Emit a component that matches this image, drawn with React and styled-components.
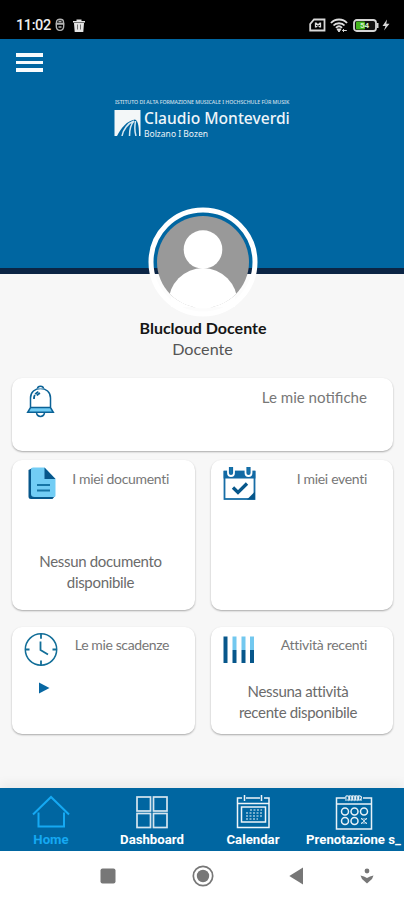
import React from 'react';
import styled, { createGlobalStyle } from 'styled-components';

const BLUE = '#0066a1';

const cards = [
  { id: 'notifiche', title: 'Le mie notifiche', icon: BellIcon, wide: true, height: 73 },
  { id: 'documenti', title: 'I miei documenti', icon: DocumentIcon, height: 150, spacing: -0.32, lines: ['Nessun documento', 'disponibile'], offset: 91, shift: -3 },
  { id: 'eventi', title: 'I miei eventi', icon: EventIcon, height: 150, spacing: -0.32 },
  { id: 'scadenze', title: 'Le mie scadenze', icon: ClockIcon, height: 107, low: true, play: true, spacing: -0.38 },
  { id: 'attivita', title: 'Attività recenti', icon: BarsIcon, height: 107, low: true, spacing: -0.28, lines: ['Nessuna attività', 'recente disponibile'], offset: 54, shift: -4 },
];

const tabs = [
  { label: 'Home', icon: HomeIcon, active: true },
  { label: 'Dashboard', icon: GridIcon },
  { label: 'Calendar', icon: CalendarIcon },
  { label: 'Prenotazione s_', icon: BookingIcon },
];

function App() {
  return (
    <Screen>
      <GlobalStyle />
      <StatusBar />
      <Header>
        <MenuButton aria-label="Menu"><i /><i /><i /></MenuButton>
        <Logo />
      </Header>
      <Profile>
        <Avatar />
        <UserName>Blucloud Docente</UserName>
        <UserRole>Docente</UserRole>
      </Profile>
      <CardGrid>
        {cards.map((card) => <Card key={card.id} card={card} />)}
      </CardGrid>
      <TabBar>
        {tabs.map((tab) => (
          <Tab key={tab.label} $active={tab.active}>
            <tab.icon />
            <TabLabel>{tab.label}</TabLabel>
          </Tab>
        ))}
      </TabBar>
      <SystemNav />
    </Screen>
  );
}

function Card({ card }) {
  const Icon = card.icon;
  return (
    <CardBox $wide={card.wide} $height={card.height}>
      <CardTop $low={card.low}>
        <Icon />
        <CardTitle $wide={card.wide} $spacing={card.spacing}>{card.title}</CardTitle>
      </CardTop>
      {card.play && (
        <PlaySvg width="12" height="12" viewBox="0 0 12 12">
          <path d="M1 0.5 L11.5 6 L1 11.5z" fill="#0867a2" />
        </PlaySvg>
      )}
      {card.lines && (
        <CardText $offset={card.offset} $low={card.low} $shift={card.shift}>
          {card.lines.map((line) => <span key={line}>{line}</span>)}
        </CardText>
      )}
    </CardBox>
  );
}

function StatusBar() {
  return (
    <StatusRow>
      <Clock>11:02</Clock>
      <svg width="10" height="14" viewBox="0 0 10 14" fill="none" stroke="#b4b4b4" strokeWidth="1.4">
        <path d="M1.5 5.500V4C1.500 .3 8.500 .3 8.500 4V5.500M.5 6h9M1.300 8C1.300 13.800 8.700 13.800 8.700 8V5.500H1.300zM3.500 9h3M3.500 3.500h3" />
      </svg>
      <TrashSvg width="12" height="13" viewBox="0 0 12 13">
        <path d="M0 2h3.5V.5h5V2H12v1.5H0zM1 4h10l-.7 9H1.700z" fill="#e5e5e5" />
        <path d="M4.500 5.500v5M7.500 5.500v5" stroke="#555" strokeWidth=".8" />
      </TrashSvg>
      <StatusSpacer />
      <svg width="17" height="14" viewBox="0 0 17 14">
        <path d="M5 1.500H15.500V12.500H1.200V6z" fill="none" stroke="#d8d8d8" strokeWidth="1.8" />
        <path d="M6.500 4.500v5M11.500 4.500v5M7 5l4 4M11 5l-4 4" stroke="#ddd" strokeWidth="1.3" />
      </svg>
      <WifiSvg width="18" height="14" viewBox="0 0 18 14" fill="none" stroke="#ddd" strokeWidth="1.900">
        <path d="M1 5C5 .3 13 .3 17 5M3.500 7.500C6 4.500 12 4.500 14.500 7.500M6 9.800c2-2 4-2 6 0" />
        <path d="M7 11h4l-2 3zM12.800 12.500h4M14 11.200l-1.500 1.300L14 13.800" fill="#ddd" strokeWidth="1" />
      </WifiSvg>
      <BatterySvg width="26" height="13" viewBox="0 0 26 13">
        <rect x="1" y="1" width="22" height="11" rx="2.800" fill="#111" stroke="#d5d5d5" strokeWidth="1.800" />
        <path d="M24.500 4v5" stroke="#d5d5d5" strokeWidth="2" />
        <rect x="3" y="2.600" width="9" height="7.800" rx="1" fill="#43b51c" />
        <text x="7" y="9.400" fontFamily="Roboto" fontSize="8" fontWeight="700" fill="#d3efc9">54</text>
      </BatterySvg>
      <svg width="8" height="12" viewBox="0 0 8 12">
        <path d="M5 .5L.5 7H3.500L2 11.500L7.500 4.800H4.300z" fill="#d7d7d7" />
      </svg>
    </StatusRow>
  );
}

function Logo() {
  return (
    <LogoBox>
      <LogoTop>ISTITUTO DI ALTA FORMAZIONE MUSICALE I HOCHSCHULE FÜR MUSIK</LogoTop>
      <LogoMain>
        <svg width="27" height="26" viewBox="0 0 27 26">
          <path d="M.5 0H26.500V26H.5z" fill="#f3f7f8" />
          <path d="M3 26C7 18 13 10.500 21 9.500C24.500 11 25 18 25 26z" fill={BLUE} />
          <path d="M8 26C9 20 14 13 20 11M15.500 26C15.500 20 17 14 20 11M22 26C20 20 21 14 21.500 11" stroke="#d8e9f2" strokeWidth="1.500" fill="none" />
        </svg>
        <LogoWords>
          <LogoName>Claudio Monteverdi</LogoName>
          <LogoPlace>Bolzano I Bozen</LogoPlace>
        </LogoWords>
      </LogoMain>
    </LogoBox>
  );
}

function Avatar() {
  return (
    <AvatarSvg width="110" height="110" viewBox="0 0 110 110">
      <defs>
        <clipPath id="face"><circle cx="55" cy="55" r="46" /></clipPath>
        <clipPath id="lower"><rect x="0" y="67" width="110" height="43" /></clipPath>
      </defs>
      <circle cx="55" cy="55" r="51" fill="#fcfcfc" clipPath="url(#lower)" />
      <circle cx="55" cy="55" r="52" fill="none" stroke="#fff" strokeWidth="5" />
      <g clipPath="url(#face)">
        <rect width="110" height="110" fill="#999" />
        <circle cx="55" cy="42.500" r="19.300" fill="#fff" />
        <ellipse cx="55" cy="96" rx="34.500" ry="35" fill="#fff" />
      </g>
      <path d="M23 89Q55 114 87 89V100H23z" fill="#fff" />
    </AvatarSvg>
  );
}

function BellIcon() {
  return (
    <svg width="33" height="33" viewBox="0 0 33 33" fill="none" stroke="#0b6296" strokeWidth="1.500">
      <path d="M6.500 22V13C6.500 7 11 3.500 16.500 3.500S26.500 7 26.500 13V22" fill="#fff" />
      <path d="M6.500 22.500h20l2.800 4.800H3.700z" fill="#72cdf4" />
      <path d="M13.500 3.500c.2-3 5.800-3 6 0M12.500 28c1 4.500 7 4.500 8 0" fill="#fff" />
      <path d="M10 14c0-4 1.500-6 5-7.500M13 10.500c.8-1.500 2-2 3.500-2.500" strokeWidth="1.800" strokeDasharray="4 1" />
    </svg>
  );
}

function DocumentIcon() {
  return (
    <DocSvg width="33" height="33" viewBox="0 0 33 33">
      <path d="M1.500 3L5.500 1V29H28L25.500 32H4Q1.500 32 1.500 29.500z" fill="#07578b" />
      <path d="M6 .5H17.500L28.500 12V28.500Q28.500 30 27 30H7.500Q4 30 4 27V2.500Q4 .5 6 .5z" fill="#72cdf5" />
      <path d="M17.500 .5L28.500 12H17.500z" fill="#07578b" />
      <path d="M10 18h13M10 23.500h13" stroke="#1675a6" strokeWidth="2.200" />
    </DocSvg>
  );
}

function EventIcon() {
  return (
    <svg width="34" height="34" viewBox="0 0 34 34">
      <rect x="1.500" y="4.500" width="30" height="27.500" fill="#fff" stroke="#176da6" strokeWidth="1.800" />
      <path d="M.6 4h31.800v7.500H.6z" fill="#1269a4" />
      <path d="M24 32.500L32 24.500V32.500z" fill="#07578b" />
      <path d="M5 0v6q0 3 3 3t3-3V0M22.500 0v6q0 3 3 3t3-3V0" fill="#1269a4" stroke="#fff" strokeWidth="1.800" />
      <path d="M8 0v6.500M25.500 0v6.500" stroke="#1673a9" strokeWidth="2" />
      <path d="M10 20.500l5 5 9-9" fill="none" stroke="#07578b" strokeWidth="3.300" />
    </svg>
  );
}

function ClockIcon() {
  return (
    <svg width="34" height="34" viewBox="0 0 34 34" fill="none" stroke="#126e98" strokeWidth="1.500">
      <circle cx="17" cy="16.500" r="15.700" />
      <path d="M17 .8v5M17 27.500v5M1 16.500h4.500M28.500 16.500H33" strokeWidth="1.800" />
      <path d="M16.500 8.500V17L24 21.500" strokeWidth="1.800" />
    </svg>
  );
}

function BarsIcon() {
  return (
    <svg width="34" height="33" viewBox="0 0 34 33">
      <path d="M2.500 3.500V30" stroke="#07578b" strokeWidth="4" />
      <path d="M11.500 3.500V17M20.500 3.500V17M29 3.500V17" stroke="#72c8ef" strokeWidth="4" />
      <path d="M11.500 17V30M20.500 17V30M29 17V30" stroke="#07578b" strokeWidth="4" />
    </svg>
  );
}

function HomeIcon() {
  return (
    <svg width="38" height="38" viewBox="0 0 38 38" fill="none" stroke="#15a9f3" strokeWidth="2">
      <path d="M1 20.500L19 3L37 20.500M6.500 18.500V32.500H32V18.500" />
    </svg>
  );
}

function GridIcon() {
  return (
    <svg width="38" height="38" viewBox="0 0 38 38" fill="none" stroke="#d5e5ef" strokeWidth="1.700">
      <rect x="4" y="3" width="13.500" height="14" /><rect x="20.500" y="3" width="13.500" height="14" />
      <rect x="4" y="19.500" width="13.500" height="14" /><rect x="20.500" y="19.500" width="13.500" height="14" />
    </svg>
  );
}

function CalendarIcon() {
  return (
    <svg width="38" height="38" viewBox="0 0 38 38" fill="none" stroke="#eef5f9" strokeWidth="1.500">
      <path d="M8 4H3.500V33.500H35V4H30M12 4H26M3 9.500H35M10.500 1v6M27.500 1v6" />
      <rect x="7.500" y="13" width="24" height="15" />
      <path d="M16 16h12M12 19h16M12 22h16M12 25h12" strokeDasharray="2 1.500" strokeWidth="1.200" />
    </svg>
  );
}

function BookingIcon() {
  return (
    <svg width="38" height="38" viewBox="0 0 38 38" fill="none" stroke="#e7f1f7" strokeWidth="1.500">
      <path d="M10 4H1.500V35H36.500V4H28M1.500 10H36.500" />
      <path d="M11 5q-1-4 2-3t1 4q-1-5 2-4t1 4q-1-5 2-4t1 4q-1-5 2-4t1 4q-1-5 2-4t0 4M10 6h17" strokeWidth="1.200" />
      <circle cx="10" cy="17.500" r="3.500" /><circle cx="19.500" cy="17.500" r="3.500" /><circle cx="29" cy="17.500" r="3.500" />
      <circle cx="10" cy="27" r="3.500" /><circle cx="19.500" cy="27" r="3.500" />
      <path d="M26 24l6 6M32 24l-6 6M26 25h6M26 29h6" strokeWidth="1" opacity=".8" />
    </svg>
  );
}

function SystemNav() {
  return (
    <SystemBar>
      <svg width="16" height="16" viewBox="0 0 16 16"><rect x=".5" y=".5" width="15" height="15" rx="2" fill="#777" /></svg>
      <svg width="22" height="22" viewBox="0 0 22 22">
        <circle cx="11" cy="11" r="9.700" fill="none" stroke="#777" strokeWidth="1.700" />
        <circle cx="11" cy="11" r="6.200" fill="#777" />
      </svg>
      <svg width="14" height="18" viewBox="0 0 14 18"><path d="M14 .5V17.500L.3 9z" fill="#777" /></svg>
      <svg width="14" height="16" viewBox="0 0 14 16">
        <circle cx="7" cy="3" r="2.400" fill="#777" />
        <path d="M.5 7.500L4 8.500 7 10 10 8.500 13.500 7.500 12 11 7 15.500 2 11z" fill="#777" />
      </svg>
    </SystemBar>
  );
}

const GlobalStyle = createGlobalStyle`
  * { box-sizing: border-box; }
  body { margin: 0; background: #f7f7f7; }
  svg { display: block; flex: none; }
`;
const Screen = styled.div`
  width: 404px;
  height: 900px;
  display: flex;
  flex-direction: column;
  overflow: hidden;
  background: #f7f7f7;
  font-family: Lato, sans-serif;
`;
const StatusRow = styled.div`
  height: 39px;
  flex: none;
  display: flex;
  align-items: center;
  padding: 11px 14px 0 16px;
  background: #000;
`;
const Clock = styled.span`
  width: 39px;
  color: #eee;
  font: 500 14.500px/18px Roboto, sans-serif;
  letter-spacing: -0.4px;
  padding-top: 1px;
`;
const TrashSvg = styled.svg`
  margin-left: 8px;
`;
const StatusSpacer = styled.div`
  flex: 1;
`;
const WifiSvg = styled.svg`
  margin-left: 4px;
`;
const BatterySvg = styled.svg`
  margin: 0 3px 0 5px;
`;
const Header = styled.header`
  height: 235px;
  flex: none;
  background: ${BLUE};
  border-bottom: 6px solid #0b2545;
  padding: 14px 16px 0;
`;
const MenuButton = styled.button`
  display: flex;
  flex-direction: column;
  gap: 4px;
  width: 27px;
  padding: 0;
  border: 0;
  background: none;

  i {
    width: 100%;
    height: 3.700px;
    background: #f8fbfd;
  }
`;
const LogoBox = styled.div`
  width: 178px;
  margin: 27px 0 0 98px;
  color: #eef5f9;
  font-family: "Noto Sans", sans-serif;
  white-space: nowrap;
`;
const LogoTop = styled.div`
  font-size: 5.300px;
  font-weight: 500;
  line-height: 7px;
  height: 11px;
  padding-left: 1px;
  letter-spacing: -0.06px;
  opacity: .85;
`;
const LogoMain = styled.div`
  display: flex;
  gap: 3px;
`;
const LogoWords = styled.div`
  display: flex;
  flex-direction: column;
`;
const LogoName = styled.span`
  height: 18px;
  font-size: 15.600px;
  font-weight: 500;
  line-height: 17px;
`;
const LogoPlace = styled.span`
  font-size: 8.500px;
  line-height: 11px;
`;
const Profile = styled.section`
  height: 104px;
  flex: none;
  display: flex;
  flex-direction: column;
  align-items: center;
`;
const AvatarSvg = styled.svg`
  margin: -67px 0 0 2px;
`;
const UserName = styled.strong`
  padding-left: 2px;
  color: #151515;
  font-size: 16px;
  font-weight: 700;
  line-height: 21px;
`;
const UserRole = styled.span`
  padding-left: 1px;
  color: #555;
  font-size: 16.200px;
  line-height: 21px;
`;
const CardGrid = styled.main`
  flex: 1;
  display: grid;
  grid-template-columns: 183px 182px;
  grid-template-rows: 73px 150px 107px;
  column-gap: 16px;
  padding-left: 12px;
  align-content: start;

  > :nth-child(n + 2) { margin-top: 9px; }
  > :nth-child(n + 4) { margin-top: 26px; }
`;
const CardBox = styled.article`
  grid-column: ${(props) => props.$wide ? '1 / -1' : 'auto'};
  height: ${(props) => props.$height}px;
  border-radius: 10px;
  background: #fff;
  box-shadow: 0 1px 2px rgba(0, 0, 0, .32);
`;
const CardTop = styled.div`
  display: flex;
  justify-content: space-between;
  padding: ${(props) => props.$low ? '6px' : '7px'} 26px 0 12px;
`;
const CardTitle = styled.span`
  color: #777;
  font-size: ${(props) => props.$wide ? 15.1 : 14}px;
  line-height: 24px;
  letter-spacing: ${(props) => props.$spacing ? `${props.$spacing}px` : 'normal'};
`;
const CardText = styled.div`
  display: flex;
  flex-direction: column;
  align-items: center;
  margin-top: ${(props) => props.$offset - (props.$low ? 39 : 40)}px;
  padding-right: ${(props) => -2 * props.$shift}px;
  color: #6b6b6b;
  font-size: 15px;
  line-height: 21px;
  letter-spacing: -0.32px;
`;
const DocSvg = styled.svg`
  margin-left: 3px;
`;
const PlaySvg = styled.svg`
  margin: 15px 0 0 26px;
`;
const TabBar = styled.nav`
  height: 63px;
  flex: none;
  display: grid;
  grid-template-columns: repeat(4, 101px);
  background: ${BLUE};
  box-shadow: 0 -5px 10px rgba(0, 0, 0, .05);
`;
const Tab = styled.a`
  display: flex;
  flex-direction: column;
  align-items: center;
  padding: 6px 0 0 1px;
  color: ${(props) => props.$active ? '#15a9f3' : '#fff'};

  &:last-child { padding-left: 0; }
`;
const TabLabel = styled.span`
  font: 700 13.200px/15px Roboto, sans-serif;
  white-space: nowrap;
`;
const SystemBar = styled.footer`
  height: 49px;
  flex: none;
  display: grid;
  grid-template-columns: 92px 97px 71px 14px;
  align-items: center;
  padding-left: 100px;
  background: #fff;
`;

export default App;
